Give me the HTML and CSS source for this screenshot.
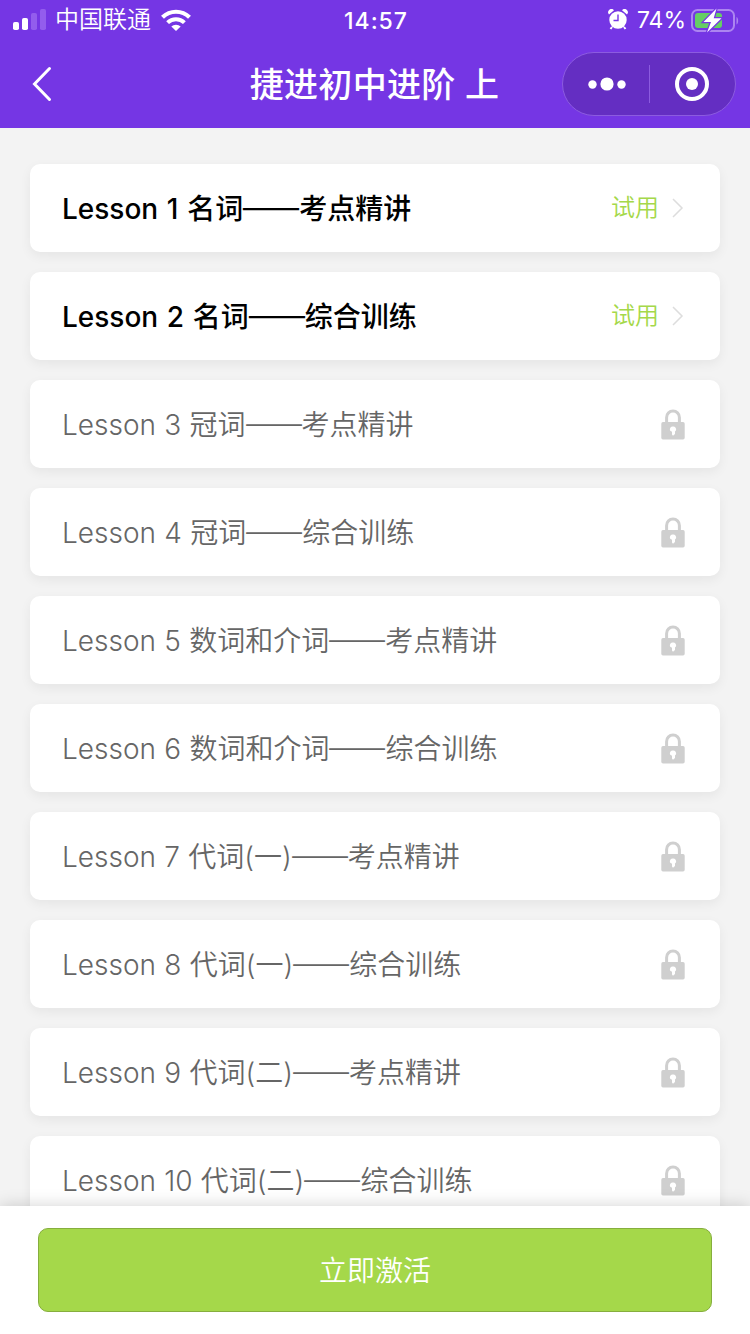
FILE: index.html
```
<!DOCTYPE html>
<html lang="zh-CN">
<head>
  <meta charset="UTF-8">
  <title>捷进初中进阶 上</title>
  <link rel="stylesheet" href="styles.css">
</head>
<body>

  <svg class="defs">
    <symbol id="lock" viewBox="0 0 24 31">
      <path d="M5.6 14V8.4a6.4 6.4 0 0 1 12.8 0V14" fill="none" stroke="currentColor" stroke-width="3"/>
      <path fill-rule="evenodd" fill="currentColor" d="M2 13h20a1.7 1.7 0 0 1 1.7 1.7v14A1.7 1.7 0 0 1 22 30.4H2a1.7 1.7 0 0 1-1.7-1.7v-14A1.7 1.7 0 0 1 2 13zM12 17.4a3 3 0 0 0-2.8 4.4l1.8 1v2.8l1 1.1 2-1.6v-2.6l.9-.9A3 3 0 0 0 12 17.4z"/>
    </symbol>
    <symbol id="arrow" viewBox="0 0 12 20">
      <path d="M1 1l9 9-9 9" fill="none" stroke="currentColor" stroke-width="1.5"/>
    </symbol>
  </svg>

  <header class="header">
    <div class="status">
      <div class="status-left">
        <svg class="signal" width="34" height="22" viewBox="0 0 34 22">
          <rect x="0" y="13" width="6" height="8" rx="1.8" fill="#fff"/>
          <rect x="9" y="9" width="6" height="12" rx="1.8" fill="#fff"/>
          <rect x="18" y="4" width="6" height="17" rx="1.8" fill="#935ded"/>
          <rect x="27" y="0" width="6" height="21" rx="1.8" fill="#935ded"/>
        </svg>
        <span class="carrier">中国联通</span>
        <svg class="wifi" width="30" height="22" viewBox="0 0 30 22">
          <path d="M1.5 8.2a19.5 19.5 0 0 1 27 0" fill="none" stroke="#fff" stroke-width="4.2"/>
          <path d="M6.6 13.6a12 12 0 0 1 16.8 0" fill="none" stroke="#fff" stroke-width="4"/>
          <path d="M10.3 17.6a6.8 6.8 0 0 1 9.4 0L15 22z" fill="#fff"/>
        </svg>
      </div>
      <div class="time">14:57</div>
      <div class="status-right">
        <svg class="alarm" width="20" height="21" viewBox="0 0 20 21">
          <circle cx="10" cy="11" r="8.7" fill="#fff"/>
          <path d="M1 5.5A3.2 3.2 0 0 1 6 1.2zM19 5.5A3.2 3.2 0 0 0 14 1.2z" fill="#fff"/>
          <path d="M4 18l-1.5 2M16 18l1.5 2" stroke="#fff" stroke-width="2"/>
          <path d="M10 5.5V11.5H5.5" fill="none" stroke="#7536e4" stroke-width="1.4"/>
        </svg>
        <span class="percent">74%</span>
        <svg class="battery" width="48" height="26" viewBox="0 0 48 26">
          <rect x="1" y="3" width="42" height="21" rx="5.5" fill="none" stroke="#ac85f0" stroke-width="2"/>
          <path d="M45.5 10v7.5c2.2-1 2.2-6.5 0-7.5z" fill="#ac85f0"/>
          <rect x="4" y="6" width="27" height="15" rx="3" fill="#65ce64"/>
          <path d="M25.5 1.5L12.5 15h7.5l-4 10.5L30.5 11.3h-7.8z" fill="#fff" stroke="#7536e4" stroke-width="2.5" paint-order="stroke"/>
        </svg>
      </div>
    </div>
    <div class="nav">
      <svg class="back" width="20" height="36" viewBox="0 0 20 36">
        <path d="M17.5 2.5L2.5 18l15 15.5" fill="none" stroke="#fff" stroke-width="3" stroke-linecap="round"/>
      </svg>
      <h1 class="title">捷进初中进阶 上</h1>
      <div class="capsule">
        <svg class="dots" width="38" height="14" viewBox="0 0 38 14">
          <circle cx="4.5" cy="7.5" r="4.2" fill="#fff"/>
          <circle cx="19" cy="7" r="6.6" fill="#fff"/>
          <circle cx="33.5" cy="7.5" r="4.2" fill="#fff"/>
        </svg>
        <span class="line"></span>
        <svg class="target" width="34" height="34" viewBox="0 0 34 34">
          <circle cx="17" cy="17" r="15" fill="none" stroke="#fff" stroke-width="4"/>
          <circle cx="17" cy="17" r="6" fill="#fff"/>
        </svg>
      </div>
    </div>
  </header>

  <main class="list">
    <div class="item open">
      <span class="name">Lesson 1 名词<i>——</i>考点精讲</span>
      <span class="trial">试用</span>
      <svg class="arrow"><use href="#arrow"/></svg>
    </div>
    <div class="item open">
      <span class="name">Lesson 2 名词<i>——</i>综合训练</span>
      <span class="trial">试用</span>
      <svg class="arrow"><use href="#arrow"/></svg>
    </div>
    <div class="item">
      <span class="name">Lesson 3 冠词<i>——</i>考点精讲</span>
      <svg class="lock"><use href="#lock"/></svg>
    </div>
    <div class="item">
      <span class="name">Lesson 4 冠词<i>——</i>综合训练</span>
      <svg class="lock"><use href="#lock"/></svg>
    </div>
    <div class="item">
      <span class="name">Lesson 5 数词和介词<i>——</i>考点精讲</span>
      <svg class="lock"><use href="#lock"/></svg>
    </div>
    <div class="item">
      <span class="name">Lesson 6 数词和介词<i>——</i>综合训练</span>
      <svg class="lock"><use href="#lock"/></svg>
    </div>
    <div class="item">
      <span class="name">Lesson 7 代词(一)<i>——</i>考点精讲</span>
      <svg class="lock"><use href="#lock"/></svg>
    </div>
    <div class="item">
      <span class="name">Lesson 8 代词(一)<i>——</i>综合训练</span>
      <svg class="lock"><use href="#lock"/></svg>
    </div>
    <div class="item">
      <span class="name">Lesson 9 代词(二)<i>——</i>考点精讲</span>
      <svg class="lock"><use href="#lock"/></svg>
    </div>
    <div class="item">
      <span class="name">Lesson 10 代词(二)<i>——</i>综合训练</span>
      <svg class="lock"><use href="#lock"/></svg>
    </div>
  </main>

  <footer class="footer">
    <button class="btn">立即激活</button>
  </footer>

</body>
</html>
```
FILE: styles.css
```
* {
  margin: 0;
  padding: 0;
  box-sizing: border-box;
}
body {
  font-family: Inter, "Noto Sans CJK SC", sans-serif;
  background: #f3f3f3;
  height: 1334px;
  display: flex;
  flex-direction: column;
  overflow: hidden;
}
svg {
  display: block;
  flex-shrink: 0;
}
.defs {
  position: absolute;
  width: 0;
  height: 0;
}

/* header */
.header {
  height: 128px;
  flex-shrink: 0;
  background: #7536e4;
  color: #fff;
}
.status {
  height: 40px;
  display: grid;
  grid-template-columns: 1fr auto 1fr;
  align-items: center;
  padding: 0 11px 0 13px;
}
.status-left,
.status-right {
  display: flex;
  align-items: center;
}
.status-right {
  justify-content: flex-end;
}
.signal,
.wifi,
.alarm,
.battery {
  margin-bottom: 1px;
}
.carrier {
  font-size: 24px;
  font-weight: 350;
  line-height: 40px;
  margin-left: 8px;
}
.wifi {
  margin-left: 10px;
}
.time {
  font-size: 23px;
  font-weight: 550;
  letter-spacing: 1px;
  padding-top: 1px;
}
.percent {
  font-size: 23px;
  margin: 0 5px 0 9px;
}
.nav {
  height: 88px;
  display: grid;
  grid-template-columns: 174px 1fr 174px;
  align-items: center;
  padding: 0 14px 0 32px;
}
.title {
  font-size: 34px;
  font-weight: 500;
  line-height: 48px;
  letter-spacing: 0.3px;
  text-align: center;
  padding: 1px 19px 0 0;
  white-space: nowrap;
}
.capsule {
  width: 174px;
  height: 64px;
  display: flex;
  align-items: center;
  background: #642ec2;
  border: 1px solid #8c5be0;
  border-radius: 32px;
}
.dots {
  margin-left: 25px;
}
.line {
  width: 1px;
  height: 38px;
  margin: 0 25px 0 23px;
  background: #8c5be0;
}

/* lessons */
.list {
  flex: 1;
  min-height: 0;
  overflow: hidden;
  display: flex;
  flex-direction: column;
  gap: 20px;
  padding: 36px 30px 0;
}
.item {
  height: 88px;
  flex-shrink: 0;
  display: flex;
  align-items: center;
  padding: 0 35px 0 32px;
  background: #fff;
  border-radius: 10px;
  box-shadow: 0 4px 12px rgba(0, 0, 0, 0.06);
  color: #666;
}
.name {
  flex: 1;
  font-size: 28px;
  font-weight: 350;
  line-height: 40px;
  padding-top: 2px;
  word-spacing: 0.4px;
  white-space: nowrap;
}
.name i {
  display: inline-block;
  width: 56px;
  text-align: center;
  font-family: "Noto Sans CJK SC", sans-serif;
  font-style: normal;
  font-weight: 400;
  line-height: 1;
  transform: translateY(-2px) scaleX(1.26);
}
.open {
  color: #000;
}
.open .name {
  font-weight: 500;
  word-spacing: 1.2px;
}
.open .name i {
  font-weight: 500;
}
.trial {
  font-size: 24px;
  font-weight: 350;
  line-height: 34px;
  color: #a5d84a;
}
.arrow {
  width: 12px;
  height: 20px;
  margin: 0 1px 0 13px;
  color: #ddd;
}
.lock {
  width: 24px;
  height: 31px;
  margin-top: 1px;
  color: #cfcfcf;
}

/* bottom bar */
.footer {
  position: relative;
  height: 128px;
  flex-shrink: 0;
  padding: 22px 38px;
  background: #fff;
  box-shadow: 0 0 16px rgba(0, 0, 0, 0.18);
}
.btn {
  display: block;
  width: 100%;
  height: 84px;
  padding-bottom: 2px;
  font: 350 28px "Noto Sans CJK SC", sans-serif;
  color: #fff;
  background: #a5d84a;
  border: 1px solid #86ae3e;
  border-radius: 10px;
}
```
